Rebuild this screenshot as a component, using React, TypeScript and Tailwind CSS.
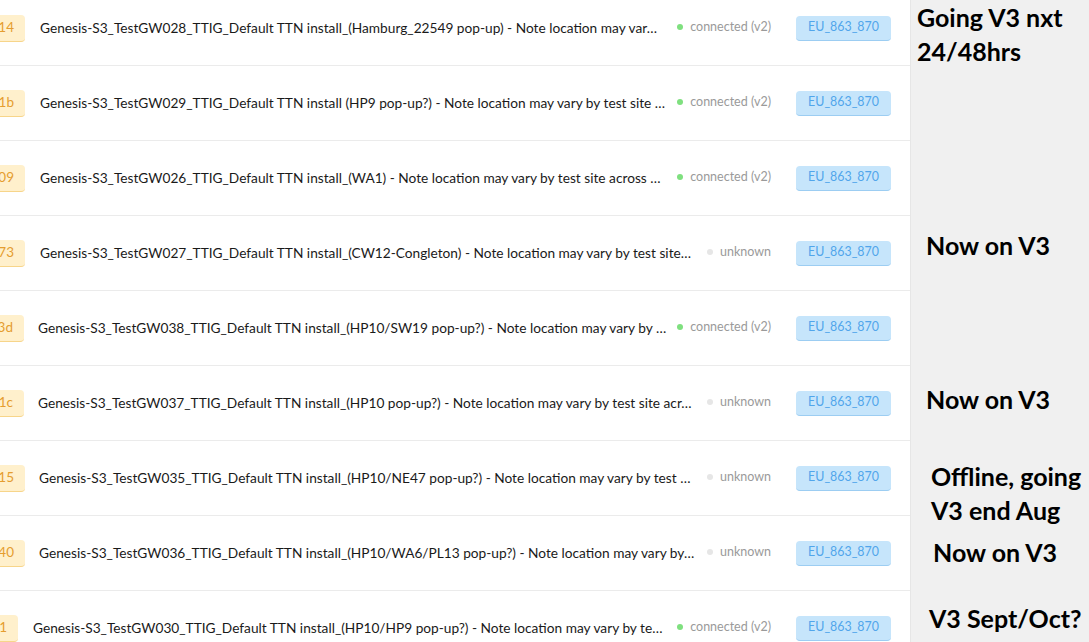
type Row = {
  id: string
  name: string
  online: boolean
  pad: number // right edge of the cut-off id badge
  gap: number // badge → name spacing
}

const rows: Row[] = [
  {
    id: '58a0cbfffe80b014',
    name: 'Genesis-S3_TestGW028_TTIG_Default TTN install_(Hamburg_22549 pop-up) - Note location may var…',
    online: true,
    pad: 25,
    gap: 15,
  },
  {
    id: '58a0cbfffe80c01b',
    name: 'Genesis-S3_TestGW029_TTIG_Default TTN install (HP9 pop-up?) - Note location may vary by test site …',
    online: true,
    pad: 25,
    gap: 15,
  },
  {
    id: '58a0cbfffe80a109',
    name: 'Genesis-S3_TestGW026_TTIG_Default TTN install_(WA1) - Note location may vary by test site across …',
    online: true,
    pad: 25,
    gap: 15,
  },
  {
    id: '58a0cbfffe80b273',
    name: 'Genesis-S3_TestGW027_TTIG_Default TTN install_(CW12-Congleton) - Note location may vary by test site…',
    online: false,
    pad: 25,
    gap: 15,
  },
  {
    id: '58a0cbfffe80c53d',
    name: 'Genesis-S3_TestGW038_TTIG_Default TTN install_(HP10/SW19 pop-up?) - Note location may vary by …',
    online: true,
    pad: 24,
    gap: 14,
  },
  {
    id: '58a0cbfffe80a41c',
    name: 'Genesis-S3_TestGW037_TTIG_Default TTN install_(HP10 pop-up?) - Note location may vary by test site acr…',
    online: false,
    pad: 24,
    gap: 14,
  },
  {
    id: '58a0cbfffe80b115',
    name: 'Genesis-S3_TestGW035_TTIG_Default TTN install_(HP10/NE47 pop-up?) - Note location may vary by test …',
    online: false,
    pad: 25,
    gap: 14,
  },
  {
    id: '58a0cbfffe80c440',
    name: 'Genesis-S3_TestGW036_TTIG_Default TTN install_(HP10/WA6/PL13 pop-up?) - Note location may vary by…',
    online: false,
    pad: 25,
    gap: 14,
  },
  {
    id: '58a0cbfffe80a221',
    name: 'Genesis-S3_TestGW030_TTIG_Default TTN install_(HP10/HP9 pop-up?) - Note location may vary by te…',
    online: true,
    pad: 18,
    gap: 15,
  },
]

// hand-written notes pasted over the screenshot, placed where they were dropped
const notes = [
  { top: 0, left: 6, lines: ['Going V3 nxt', '24/48hrs'] },
  { top: 228, left: 15, lines: ['Now on V3'] },
  { top: 382, left: 15, lines: ['Now on V3'] },
  { top: 459, left: 20, lines: ['Offline, going', 'V3 end Aug'] },
  { top: 535, left: 22, lines: ['Now on V3'] },
  { top: 601, left: 18, lines: ['V3 Sept/Oct?'] },
]

function GatewayRow({ row }: { row: Row }) {
  return (
    <div className="flex h-[75px] items-center border-b border-[#ebebeb] pr-[19px]">
      {/* id badge runs off the left edge — only its tail is visible */}
      <div className="flex shrink-0 justify-end" style={{ width: row.pad }}>
        <span className="flex h-[27px] items-center whitespace-nowrap rounded-[4px] border-b border-[#f7d58a] bg-[#fff0cc] px-[11px] text-[13.5px] text-[#e59d2f]">
          {row.id}
        </span>
      </div>
      <div
        className="min-w-0 flex-1 overflow-hidden whitespace-nowrap text-[13.7px] text-[#1a1a1a]"
        style={{ marginLeft: row.gap }}
      >
        {row.name}
      </div>
      <div className="ml-[6px] flex shrink-0 items-center gap-[7px] pb-[2px] text-[12.5px] text-[#9a9a9a]">
        <span
          className={`h-[6px] w-[6px] rounded-full ${row.online ? 'bg-[#7fe07f]' : 'bg-[#e6e6e6]'}`}
        />
        {row.online ? 'connected (v2)' : 'unknown'}
      </div>
      <span className="ml-[25px] flex h-[25px] w-[95px] shrink-0 items-center justify-center rounded-[4px] border-b border-[#9ccdf2] bg-[#c6e5fb] text-[12.4px] text-[#51a5eb]">
        EU_863_870
      </span>
    </div>
  )
}

export default function App() {
  return (
    <div className="flex h-[642px] w-[1089px] overflow-hidden bg-white font-['Lato',sans-serif]">
      <div className="w-[911px] shrink-0 border-r border-[#e6e6e6] bg-white">
        <div className="-mt-[9px]">
          {rows.map((r) => (
            <GatewayRow key={r.id} row={r} />
          ))}
        </div>
      </div>
      <div className="relative flex-1 bg-[#f0f0f0]">
        {notes.map((n, i) => (
          <div
            key={i}
            className="absolute whitespace-nowrap text-[25px] font-bold leading-[34px] text-black"
            style={{ top: n.top, left: n.left }}
          >
            {n.lines.map((l) => (
              <div key={l}>{l}</div>
            ))}
          </div>
        ))}
      </div>
    </div>
  )
}
